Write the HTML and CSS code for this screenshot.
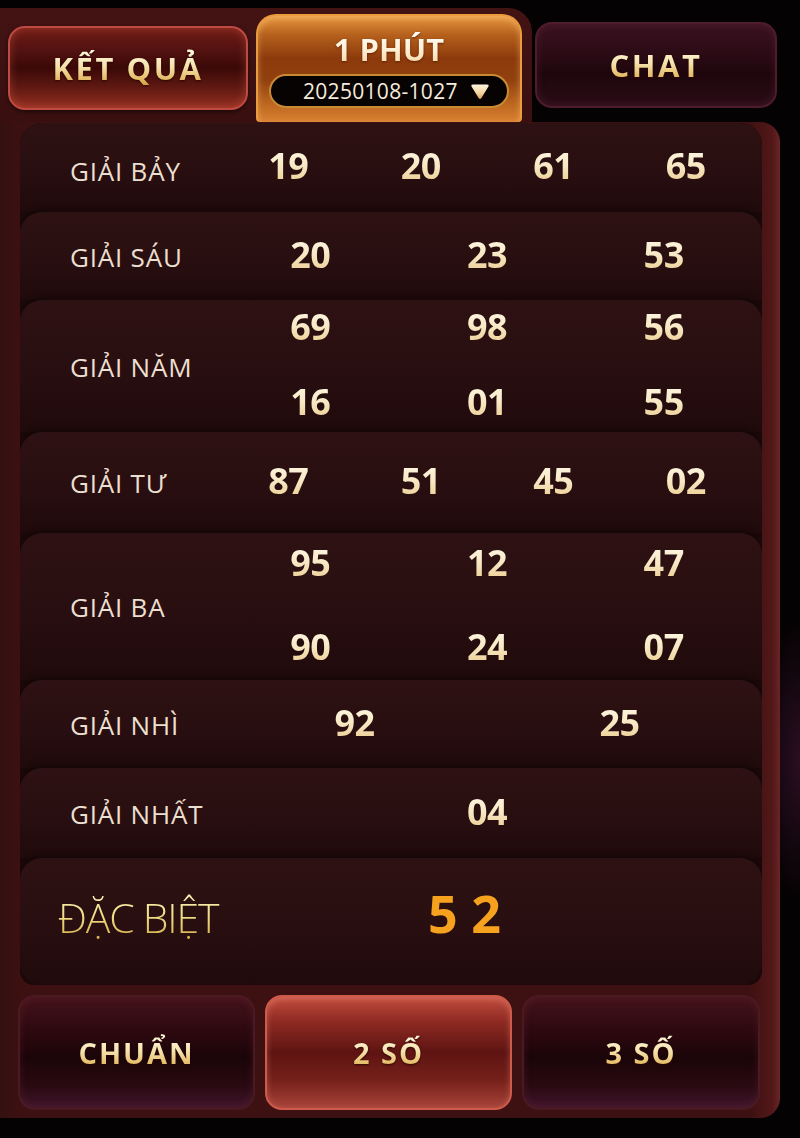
FILE: index.html
```html
<!DOCTYPE html>
<html lang="vi">
<head>
<meta charset="utf-8">
<title>Kết quả</title>
<link rel="stylesheet" href="styles.css">
</head>
<body>
<div class="app">
  <div class="header">
    <div class="hdr-frame">
      <div class="tab tab-result"><span class="gold tab-text">KẾT QUẢ</span></div>
      <div class="tab tab-time">
        <span class="time-title">1 PHÚT</span>
        <div class="pill">
          <span class="pill-text">20250108-1027</span>
          <svg class="pill-arrow" width="20" height="17" viewBox="0 0 20 17">
            <defs>
              <linearGradient id="tri" x1="0" y1="0" x2="0" y2="1">
                <stop offset="0" stop-color="#fff6e0"/>
                <stop offset="0.55" stop-color="#f5d7a4"/>
                <stop offset="1" stop-color="#e0a060"/>
              </linearGradient>
            </defs>
            <path d="M3 1.5 H17 Q19.5 1.5 18.3 3.8 L11.4 15 Q10 17 8.6 15 L1.7 3.8 Q0.5 1.5 3 1.5 Z" fill="url(#tri)"/>
          </svg>
        </div>
      </div>
    </div>
    <div class="tab tab-chat"><span class="gold tab-text">CHAT</span></div>
  </div>

  <div class="board">
    <div class="rows">
      <div class="row r-bay">
        <div class="label">GIẢI BẢY</div>
        <div class="nums c4"><span>19</span><span>20</span><span>61</span><span>65</span></div>
      </div>
      <div class="row r-sau">
        <div class="label">GIẢI SÁU</div>
        <div class="nums c3"><span>20</span><span>23</span><span>53</span></div>
      </div>
      <div class="row r-nam">
        <div class="label">GIẢI NĂM</div>
        <div class="nums c3 gap-nam"><span>69</span><span>98</span><span>56</span><span>16</span><span>01</span><span>55</span></div>
      </div>
      <div class="row r-tu">
        <div class="label">GIẢI TƯ</div>
        <div class="nums c4"><span>87</span><span>51</span><span>45</span><span>02</span></div>
      </div>
      <div class="row r-ba">
        <div class="label">GIẢI BA</div>
        <div class="nums c3 gap-ba"><span>95</span><span>12</span><span>47</span><span>90</span><span>24</span><span>07</span></div>
      </div>
      <div class="row r-nhi">
        <div class="label">GIẢI NHÌ</div>
        <div class="nums c2"><span>92</span><span>25</span></div>
      </div>
      <div class="row r-nhat">
        <div class="label">GIẢI NHẤT</div>
        <div class="nums c1"><span>04</span></div>
      </div>
      <div class="row r-special">
        <div class="sp-label">ĐẶC BIỆT</div>
        <div class="sp-num">5 2</div>
      </div>
    </div>

    <div class="modes">
      <div class="mode mode-dark m1"><span class="gold mode-text">CHUẨN</span></div>
      <div class="mode mode-active m2"><span class="gold mode-text">2 SỐ</span></div>
      <div class="mode mode-dark m3"><span class="gold mode-text">3 SỐ</span></div>
    </div>
  </div>
</div>
</body>
</html>
```

FILE: styles.css
```css
* { box-sizing: border-box; }

html, body {
  margin: 0;
  padding: 0;
}

body {
  width: 800px;
  height: 1138px;
  overflow: hidden;
  background: radial-gradient(ellipse 60px 200px at 800px 760px, rgba(90, 30, 70, 0.45), rgba(0,0,0,0) 70%), #050203;
  font-family: "Open Sans", "Noto Sans", "DejaVu Sans", sans-serif;
}

.app {
  width: 800px;
}

/* ---------- header ---------- */
.header {
  display: flex;
  align-items: flex-start;
  height: 122px;
}

.hdr-frame {
  width: 532px;
  height: 114px;
  margin-top: 8px;
  background: linear-gradient(180deg, #431313 0%, #3a0f10 100%);
  border-radius: 0 24px 0 0;
  display: flex;
  align-items: flex-start;
  padding-left: 8px;
}

.tab {
  display: flex;
  align-items: center;
  justify-content: center;
}

.tab-result {
  width: 240px;
  height: 84px;
  margin-top: 18px;
  border-radius: 17px;
  border: 2px solid #bf4a42;
  background: linear-gradient(180deg, #711c15 0%, #521210 28%, #3a0907 50%, #5c1711 72%, #922e20 100%);
  box-shadow: inset 0 0 10px rgba(255, 120, 90, 0.3), 0 2px 4px rgba(0,0,0,0.5);
}

.tab-time {
  width: 266px;
  height: 108px;
  margin-top: 6px;
  margin-left: 8px;
  border-radius: 20px 20px 4px 4px;
  border: 2px solid #eb9a3c;
  border-bottom: none;
  background: linear-gradient(180deg, #e8963e 0%, #b5601c 18%, #8c3a0c 40%, #91400e 60%, #c06a22 85%, #d98030 100%);
  box-shadow: inset 0 2px 6px rgba(255, 210, 140, 0.45);
  flex-direction: column;
  justify-content: flex-start;
  padding-top: 13px;
}

.time-title {
  font-weight: 700;
  font-size: 31px;
  line-height: 40px;
  letter-spacing: 0px;
  color: #fff3dc;
  background: linear-gradient(180deg, #ffffff 0%, #fff0d6 50%, #f2cf9a 100%);
  -webkit-background-clip: text;
  background-clip: text;
  -webkit-text-fill-color: transparent;
  filter: drop-shadow(0 1px 1px rgba(80, 20, 0, 0.7));
}

.pill {
  margin-top: 5px;
  width: 240px;
  height: 34px;
  border-radius: 17px;
  background: #070303;
  border: 2px solid #c98a34;
  display: flex;
  align-items: center;
  padding-left: 32px;
}

.pill-text {
  color: #f6ecdc;
  font-size: 21px;
  line-height: 30px;
  letter-spacing: 0.3px;
}

.pill-arrow {
  margin-left: 12px;
  margin-top: 1px;
}

.tab-chat {
  width: 242px;
  height: 86px;
  margin-top: 22px;
  margin-left: 3px;
  border-radius: 17px;
  border: 2px solid #4e1c2a;
  background: linear-gradient(180deg, #3a1220 0%, #2a0a14 40%, #1e060c 60%, #2a0c16 100%);
  box-shadow: inset 0 0 8px rgba(150, 60, 90, 0.25);
}

.gold {
  background: linear-gradient(180deg, #fffbe6 0%, #f6e3ae 45%, #e6bf6c 75%, #c9962e 100%);
  -webkit-background-clip: text;
  background-clip: text;
  -webkit-text-fill-color: transparent;
  color: #f2d592;
  filter: drop-shadow(0 1px 1px rgba(40, 5, 0, 0.9));
}

.tab-text {
  font-weight: 700;
  font-size: 31px;
  line-height: 40px;
  letter-spacing: 2.5px;
}

/* ---------- board ---------- */
.board {
  width: 780px;
  background: linear-gradient(90deg, #351010 0%, #3d1011 3%, #3d1011 96%, #521818 99%, #6a2426 100%);
  border-radius: 0 20px 20px 0;
  padding: 1px 18px 8px 20px;
}

.rows {
  background: #1d090a;
  border-radius: 22px 22px 14px 14px;
  overflow: hidden;
}

.row {
  display: flex;
  align-items: center;
  border-radius: 22px 22px 0 0;
  background: linear-gradient(180deg, #2d1113 0%, #2a0f11 45%, #200a0b 100%);
  box-shadow: 0 -3px 6px rgba(0, 0, 0, 0.35);
  padding-left: 50px;
}

.r-bay { height: 89px; }
.r-sau { height: 88px; }
.r-nam { height: 132px; }
.r-tu { height: 101px; }
.r-ba { height: 147px; }
.r-nhi { height: 88px; }
.r-nhat { height: 90px; }
.r-special { height: 127px; padding-left: 38px; padding-bottom: 10px; border-radius: 22px; }

.label {
  width: 152px;
  flex: none;
  color: #ebdfcf;
  font-size: 26px;
  line-height: 34px;
  letter-spacing: 0.8px;
  padding-top: 1px;
}

.r-bay .label { padding-top: 7px; }

.nums {
  width: 530px;
  display: grid;
  justify-items: center;
  align-items: center;
  margin-top: -3px;
}

.c4 { grid-template-columns: repeat(4, 1fr); }
.c3 { grid-template-columns: repeat(3, 1fr); }
.c2 { grid-template-columns: repeat(2, 1fr); }
.c1 { grid-template-columns: 1fr; }

.gap-nam { row-gap: 33px; }
.gap-ba { row-gap: 42px; }

.nums span {
  font-weight: 700;
  font-size: 36px;
  line-height: 42px;
  letter-spacing: -0.5px;
  background: linear-gradient(180deg, #fffaea 0%, #f8e8c4 50%, #e9c888 100%);
  -webkit-background-clip: text;
  background-clip: text;
  -webkit-text-fill-color: transparent;
  color: #f5e2b8;
}

.sp-label {
  width: 164px;
  flex: none;
  font-size: 41px;
  font-weight: 300;
  line-height: 52px;
  letter-spacing: -1.2px;
  background: linear-gradient(180deg, #fff6c0 0%, #f0dc84 50%, #d0a840 100%);
  -webkit-background-clip: text;
  background-clip: text;
  -webkit-text-fill-color: transparent;
  color: #ecd478;
}

.sp-num {
  padding-left: 206px;
  font-weight: 700;
  font-size: 52px;
  line-height: 60px;
  color: #f7a21e;
  margin-top: -8px;
}

/* ---------- mode buttons ---------- */
.modes {
  display: flex;
  gap: 10px;
  margin-top: 10px;
  margin-left: -2px;
}

.mode {
  height: 115px;
  border-radius: 17px;
  display: flex;
  align-items: center;
  justify-content: center;
}

.m1 { width: 237px; }
.m2 { width: 247px; }
.m3 { width: 238px; }

.mode-dark {
  border: 2px solid #4a1a22;
  background: linear-gradient(180deg, #44121a 0%, #2a080e 35%, #1a0508 55%, #2a0a12 80%, #40152a 100%);
  box-shadow: inset 0 0 8px rgba(140, 50, 70, 0.25);
}

.mode-active {
  border: 2px solid #cf5a4a;
  background: linear-gradient(180deg, #c24c3e 0%, #8e2a22 22%, #5e1412 50%, #76201a 75%, #a8443a 100%);
  box-shadow: inset 0 2px 6px rgba(255, 170, 150, 0.35);
}

.mode-text {
  font-weight: 700;
  font-size: 29px;
  line-height: 40px;
  letter-spacing: 2px;
}
```
